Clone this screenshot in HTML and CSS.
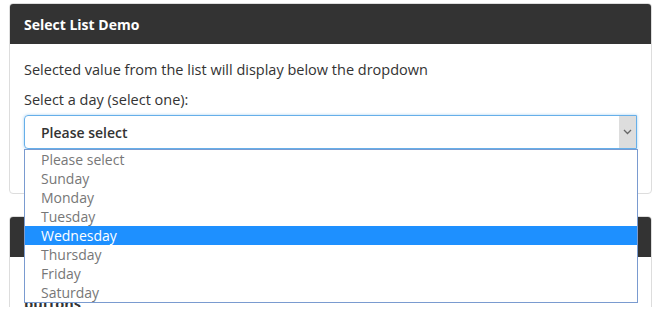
FILE: index.html
```html
<!DOCTYPE html>
<html>
<head>
<meta charset="utf-8">
<link rel="stylesheet" href="styles.css">
</head>
<body>
<div class="page">
  <div class="panel">
    <div class="panel-head">Select List Demo</div>
    <div class="panel-body">
      <p class="lead">Selected value from the list will display below the dropdown</p>
      <label class="label">Select a day (select one):</label>
      <div class="select">
        <span class="select-value">Please select</span>
        <span class="select-arrow">
          <svg width="9" height="6" viewBox="0 0 9 6"><path d="M1 1 L4.5 4.5 L8 1" fill="none" stroke="#666" stroke-width="1.3"/></svg>
        </span>
      </div>
      <div class="result"></div>
    </div>
  </div>
  <div class="panel">
    <div class="panel-head"></div>
    <div class="panel-body panel-body-2">
      <p class="lead strong">buttons</p>
    </div>
  </div>
  <ul class="dropdown">
    <li>Please select</li>
    <li>Sunday</li>
    <li>Monday</li>
    <li>Tuesday</li>
    <li class="active">Wednesday</li>
    <li>Thursday</li>
    <li>Friday</li>
    <li>Saturday</li>
  </ul>
</div>
</body>
</html>
```
FILE: styles.css
```css
html, body {
  margin: 0;
  padding: 0;
  background: #fff;
}
body {
  font-family: "Open Sans", "Liberation Sans", sans-serif;
  color: #333;
}
.page {
  position: relative;
  height: 307px;
  overflow: hidden;
  padding: 3px 12px 0 9px;
  box-sizing: border-box;
}
.panel {
  border: 1px solid #ddd;
  border-radius: 4px;
  margin-bottom: 22px;
  background: #fff;
}
.panel-head {
  background: #333;
  color: #fff;
  height: 40px;
  display: flex;
  align-items: center;
  padding: 0 14px;
  font-weight: bold;
  font-size: 14px;
  border-radius: 3px 3px 0 0;
}
.panel-body {
  padding: 16px 14px 14px;
}
.panel-body-2 {
  padding-top: 37px;
}
.lead {
  margin: 0 0 10px;
  font-size: 14.5px;
  line-height: 20px;
}
.strong {
  font-weight: bold;
}
.label {
  display: block;
  font-size: 14.5px;
  line-height: 20px;
  margin-bottom: 5px;
}
.select {
  height: 34px;
  box-sizing: border-box;
  border: 1px solid #66afe9;
  border-radius: 4px 0 0 4px;
  box-shadow: 0 0 3px rgba(102,175,233,.6);
  display: flex;
  align-items: stretch;
}
.select-value {
  flex: 1;
  display: flex;
  align-items: center;
  padding-left: 16px;
  font-size: 14px;
  font-weight: 600;
  color: #333;
}
.select-arrow {
  width: 17px;
  background: #ddd;
  display: flex;
  align-items: center;
  justify-content: center;
}
.result {
  height: 30px;
}
.dropdown {
  position: absolute;
  left: 24px;
  top: 149px;
  width: 614px;
  box-sizing: border-box;
  margin: 0;
  padding: 0;
  list-style: none;
  border: 1px solid #7a9bd0;
  background: #fff;
}
.dropdown li {
  height: 19px;
  line-height: 19px;
  padding-left: 16px;
  font-size: 14px;
  color: #777;
}
.dropdown li.active {
  background: #1e90ff;
  color: #fff;
}
```
